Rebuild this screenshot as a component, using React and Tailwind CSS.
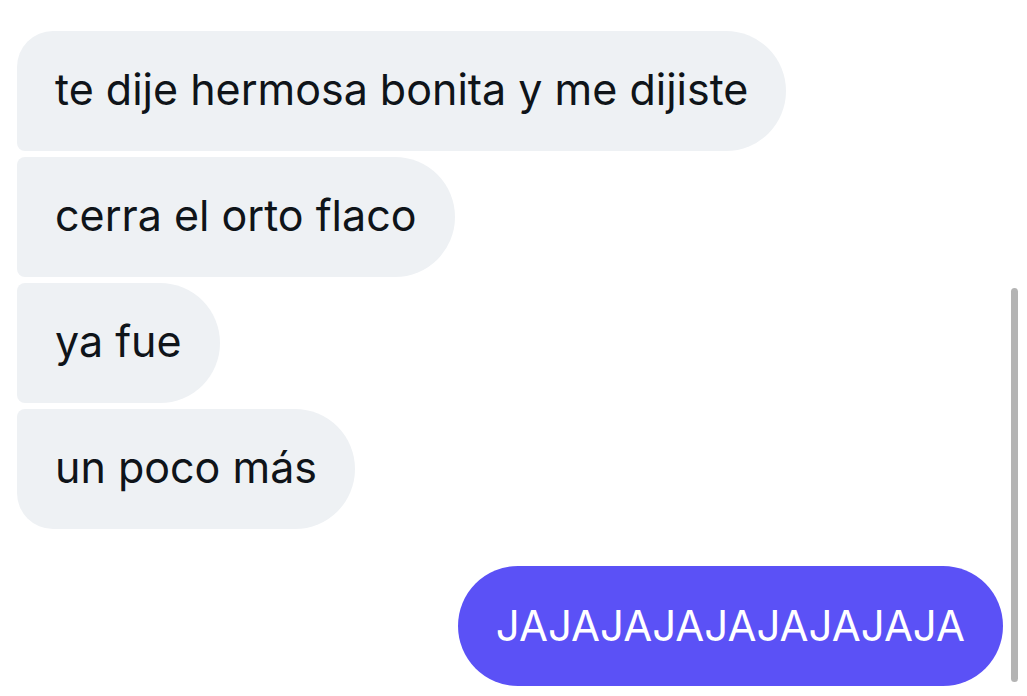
import React from "react";

const messages = [
  { text: "te dije hermosa bonita y me dijiste", corners: "rounded-tl-[36px] rounded-bl-[8px]" },
  { text: "cerra el orto flaco", corners: "rounded-tl-[8px] rounded-bl-[8px]" },
  { text: "ya fue", corners: "rounded-tl-[8px] rounded-bl-[8px]" },
  { text: "un poco más", corners: "rounded-tl-[8px] rounded-bl-[36px]" },
];

const App = () => {
  return (
    <div
      className="relative w-[1027px] h-[696px] bg-white overflow-hidden"
      style={{ fontFamily: "Inter, 'Noto Sans', sans-serif" }}
    >
      <div className="flex flex-col items-start gap-[6px] pt-[31px] pl-[17px]">
        {messages.map((m) => (
          <div
            key={m.text}
            className={`h-[120px] flex items-center pl-[38px] pr-[38px] pb-[3px] bg-[#eef1f4] text-[#0f1419] text-[43px] rounded-r-[60px] ${m.corners}`}
          >
            {m.text}
          </div>
        ))}
      </div>

      <div className="flex justify-end pr-[24px] mt-[37px]">
        <div className="h-[120px] flex items-center px-[38px] pb-[2px] bg-[#5b51f6] text-white text-[42px] rounded-[60px]">
          JAJAJAJAJAJAJAJAJA
        </div>
      </div>

      {/* scrollbar thumb */}
      <div className="absolute right-[9px] top-[288px] w-[7px] h-[394px] rounded-full bg-[#b4b4b4]" />
    </div>
  );
};

export default App;
